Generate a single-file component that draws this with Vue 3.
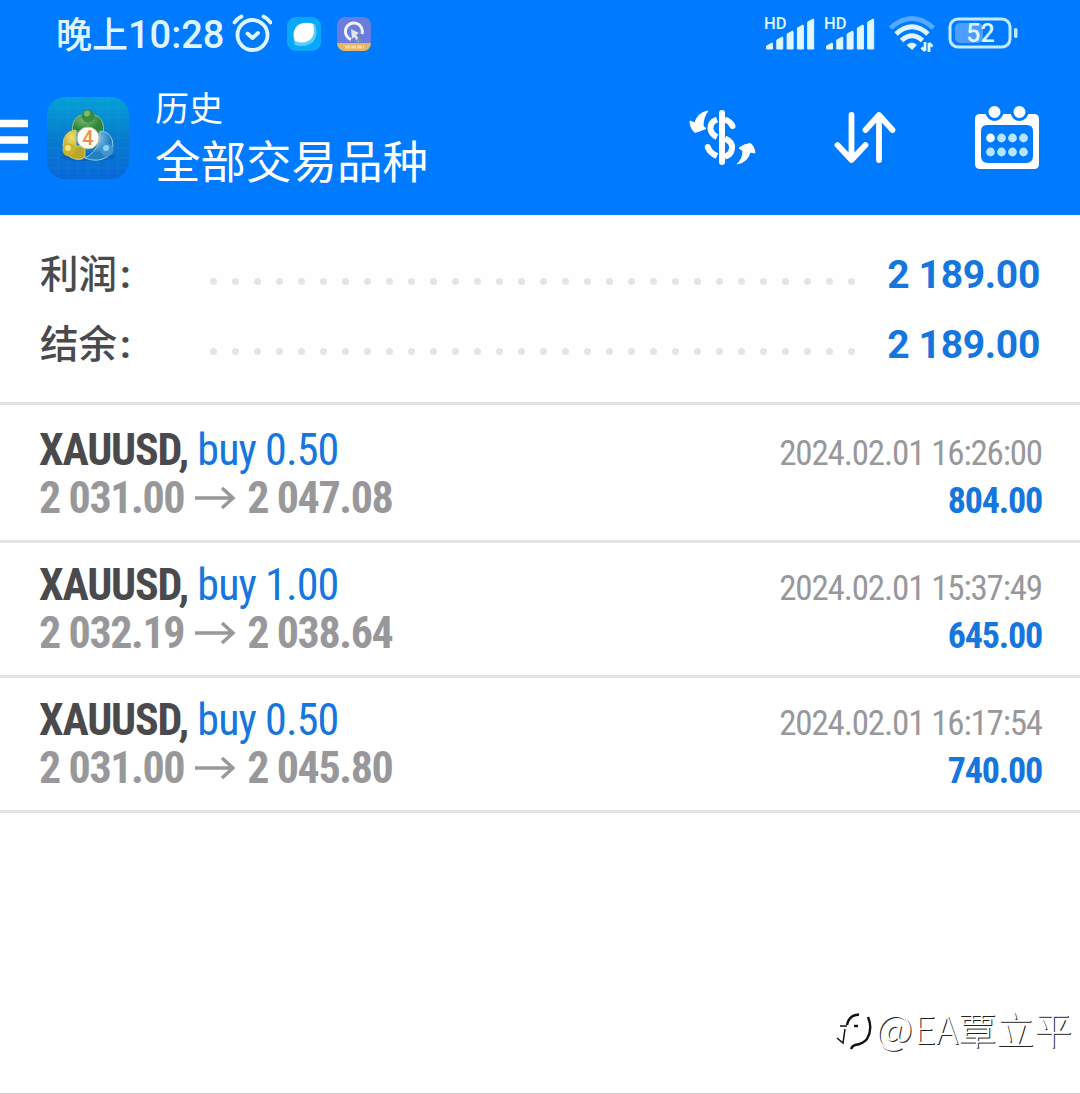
<script setup>
import { ref } from "vue";

const summary = ref([
    { label: "利润", value: "2 189.00" },
    { label: "结余", value: "2 189.00" },
]);

const deals = ref([
    {
        symbol: "XAUUSD",
        side: "buy 0.50",
        open: "2 031.00",
        close: "2 047.08",
        time: "2024.02.01 16:26:00",
        profit: "804.00",
    },
    {
        symbol: "XAUUSD",
        side: "buy 1.00",
        open: "2 032.19",
        close: "2 038.64",
        time: "2024.02.01 15:37:49",
        profit: "645.00",
    },
    {
        symbol: "XAUUSD",
        side: "buy 0.50",
        open: "2 031.00",
        close: "2 045.80",
        time: "2024.02.01 16:17:54",
        profit: "740.00",
    },
]);

const bars = [6, 12, 18, 24, 30];
</script>

<template>
    <div class="screen">
        <header class="top">
            <div class="status">
                <span class="clock">晚上<span class="digits">10:28</span></span>
                <svg class="alarm" width="40" height="40" viewBox="0 0 40 40">
                    <g fill="none" stroke="#dff6ff" stroke-width="3.8" stroke-linecap="round">
                        <circle cx="20.5" cy="21" r="15" />
                        <path d="M2.500 8.500Q5 4.500 9.500 2.500M31.500 2.500Q36 4.500 38.500 8.500" />
                        <path d="M15.500 19.500L20.500 24L26 19" stroke-linejoin="round" />
                    </g>
                </svg>
                <svg class="app-a" width="34" height="34" viewBox="0 0 34 34">
                    <rect width="34" height="34" rx="9" fill="#08a9fa" />
                    <path d="M8 28Q4 17 10 10Q17 4 28 7Q32 18 26 25Q18 31 8 28Z" fill="#59cdfb" />
                    <path d="M8 24Q4 14 11 8Q18 4 26 7Q29 16 24 22Q17 28 8 24Z" fill="#fff" />
                </svg>
                <svg class="app-b" width="34" height="34" viewBox="0 0 34 34">
                    <defs>
                        <clipPath id="quick"><rect width="34" height="34" rx="8" /></clipPath>
                    </defs>
                    <g clip-path="url(#quick)">
                        <rect width="34" height="34" fill="#687ddd" />
                        <path d="M0 26H34V34H0Z" fill="#e4b565" />
                        <path d="M8 30H27" stroke="#f3d9a5" stroke-width="3" stroke-dasharray="5 1" />
                    </g>
                    <path d="M14 22.500A8.500 8.500 0 1 1 25 17" fill="none" stroke="#f0f2ff" stroke-width="3" />
                    <path d="M14 12L22 16L19 18L24 23L21 25L17 20L15 22Z" fill="#e3e4ee" />
                    <path d="M21 19L25 24H20Z" fill="#8d8794" />
                </svg>
                <svg class="signals" width="114" height="48" viewBox="0 -6 114 48">
                    <g v-for="n in 2" :key="n" :transform="`translate(${(n - 1) * 60} 0)`" fill="#dff6ff">
                        <text x="2" y="13" class="hd">HD</text>
                        <path
                            v-for="(h, i) in bars"
                            :key="i"
                            :d="`M${4.5 + i * 10.3} 33V${36 - h}l5.500 -3q.5 0 .5 1V33z`"
                            stroke="#dff6ff"
                            stroke-linejoin="round"
                        />
                    </g>
                </svg>
                <svg class="wifi" width="48" height="40" viewBox="0 0 48 40">
                    <g fill="none" stroke="#dff6ff" stroke-width="5">
                        <path d="M2.500 14Q24 -5 45.500 14" stroke="#55a9ff" />
                        <path d="M8 20Q24 5.500 40 20" />
                        <path d="M13.500 26.500Q24 17 34.500 26.500" />
                    </g>
                    <path d="M18.500 31Q24 26 29 31L24 36Z" fill="#dff6ff" />
                    <path
                        d="M37 28V37M33.500 33.500L37 37M41 38V29M41 29L44.500 32.500"
                        fill="none"
                        stroke="#dff6ff"
                        stroke-width="2.800"
                    />
                </svg>
                <svg class="battery" width="72" height="34" viewBox="0 0 72 34">
                    <rect x="7" y="6" width="28" height="20" rx="5" fill="#4d9dff" />
                    <rect x="2" y="2" width="60" height="28" rx="8" fill="none" stroke="#c4eaff" stroke-width="3" />
                    <rect x="66" y="11" width="3.500" height="10" rx="1.700" fill="#c4eaff" />
                    <text x="32.500" y="25" text-anchor="middle" class="charge">52</text>
                </svg>
            </div>

            <div class="toolbar">
                <svg class="menu" width="28" height="42" viewBox="0 0 28 42">
                    <path d="M0 4.500H28M0 21H28M0 37.500H28" stroke="#fff" stroke-width="7.500" />
                </svg>
                <svg class="logo" width="82" height="82" viewBox="0 0 82 82">
                    <defs>
                        <linearGradient id="tile" x1="0" y1="0" x2="0" y2="1">
                            <stop offset="0" stop-color="#05a0d8" />
                            <stop offset=".5" stop-color="#087bcc" />
                            <stop offset="1" stop-color="#0868da" />
                        </linearGradient>
                        <radialGradient id="green" cx=".4" cy=".25">
                            <stop offset="0" stop-color="#7dbb69" />
                            <stop offset="1" stop-color="#2c8440" />
                        </radialGradient>
                        <radialGradient id="yellow" cx=".4" cy=".25">
                            <stop offset="0" stop-color="#f0e06c" />
                            <stop offset="1" stop-color="#b8a62c" />
                        </radialGradient>
                        <radialGradient id="blue" cx=".4" cy=".25">
                            <stop offset="0" stop-color="#8fd0f4" />
                            <stop offset="1" stop-color="#287fc0" />
                        </radialGradient>
                    </defs>
                    <rect width="82" height="82" rx="18" fill="url(#tile)" />
                    <path
                        d="M11 1V81M21 0V82M31 0V82M41 0V82M51 0V82M61 0V82M71 1V81M1 11H81M0 21H82M0 31H82M0 41H82M0 51H82M0 61H82M1 71H81"
                        stroke="#35b7ec"
                        stroke-width=".7"
                        opacity=".2"
                    />
                    <ellipse cx="41" cy="60" rx="28" ry="4" fill="#064b8c" opacity=".35" />
                    <path d="M26 38Q23 22 34 18H48Q59 22 56 38L48 35Q41 28 31 35Z" fill="url(#green)" stroke="#8fc27a" />
                    <path d="M29 33Q16 34 16 49L23 60Q33 65 38 60V49H29Z" fill="url(#yellow)" stroke="#d8cf6b" />
                    <path d="M53 34Q66 35 66 49L60 60Q50 66 38 61Q48 56 52 45Z" fill="url(#blue)" stroke="#8bcbed" />
                    <circle cx="41" cy="19" r="6.500" fill="#388c46" />
                    <circle cx="40" cy="16.500" r="3" fill="#7dbb69" />
                    <circle cx="22" cy="53" r="6.500" fill="#c8b32c" />
                    <circle cx="21" cy="51" r="3" fill="#efe37f" />
                    <circle cx="60" cy="53" r="6.500" fill="#4295d0" />
                    <circle cx="59" cy="51" r="3" fill="#8fd0f4" />
                    <circle cx="41" cy="41" r="11" fill="#fffdf8" stroke="#bcb9a2" />
                    <text x="41" y="48" text-anchor="middle" class="four">4</text>
                </svg>
                <div class="titles">
                    <div class="title">历史</div>
                    <div class="subtitle">全部交易品种</div>
                </div>
                <svg class="currency" width="68" height="58" viewBox="0 0 68 58">
                    <g fill="none" stroke="#fff" stroke-width="6">
                        <path d="M33 4V53" stroke-linecap="round" />
                        <path d="M28 10.500Q21 13 21.500 20Q22 25 28 28M36 10.500Q41 12 43.500 17M19 38.500Q21 44 28 47M36 29.500Q44 33 43 39.500Q42 46 36 47.500" />
                        <path d="M43 16L43.500 17M18.800 38L19 38.500" stroke-linecap="round" />
                    </g>
                    <path
                        d="M19 2Q8 4 6 14L1 12Q1 19 6 23.500Q11 22 17 19.500L14 17Q14 8 19 2Z"
                        fill="#fff"
                        stroke="#fff"
                        stroke-linejoin="round"
                    />
                    <path
                        d="M48 55Q59 53 61 43L66 44Q65 37 61.500 34.500Q55 35 50 39L54 42Q54 50 48 55Z"
                        fill="#fff"
                        stroke="#fff"
                        stroke-linejoin="round"
                    />
                </svg>
                <svg class="sort" width="62" height="54" viewBox="0 0 62 54">
                    <path
                        d="M17.500 4V48M3.500 34L17.500 49L31.500 34M45 49V5M31.500 19L45 4L58.500 19"
                        fill="none"
                        stroke="#fff"
                        stroke-width="5.800"
                        stroke-linecap="round"
                        stroke-linejoin="round"
                    />
                </svg>
                <svg class="calendar" width="66" height="66" viewBox="0 0 66 66">
                    <path
                        fill-rule="evenodd"
                        fill="#fff"
                        d="M6 9H60Q65 9 65 14V59Q65 64 60 64H6Q1 64 1 59V14Q1 9 6 9ZM13 20Q7 20 7 26V51Q7 58 14 58H52Q59 58 59 51V26Q59 20 53 20Z"
                    />
                    <g fill="#fff" stroke="#007aff" stroke-width="3">
                        <circle cx="20.500" cy="7" r="7.500" />
                        <circle cx="45.500" cy="7" r="7.500" />
                    </g>
                    <circle
                        v-for="n in 8"
                        :key="n"
                        :cx="16.5 + ((n - 1) % 4) * 11"
                        :cy="n > 4 ? 47 : 33"
                        r="4.400"
                        :fill="n === 1 ? '#f2fdff' : '#b5e6ff'"
                    />
                </svg>
            </div>
        </header>

        <section class="summary">
            <div v-for="item in summary" :key="item.label" class="total">
                <span class="label">{{ item.label }}<span class="colon">:</span></span>
                <svg class="dots" width="650" height="8" viewBox="0 0 650 8">
                    <circle v-for="n in 30" :key="n" :cx="3.5 + (n - 1) * 22" cy="4.500" r="3.500" fill="#e4e4e5" />
                </svg>
                <span class="amount">{{ item.value }}</span>
            </div>
        </section>

        <main>
            <article v-for="deal in deals" :key="deal.time" class="deal">
                <div class="left">
                    <div class="symbol">
                        <b>{{ deal.symbol }},</b> <span>{{ deal.side }}</span>
                    </div>
                    <div class="prices">
                        <span>{{ deal.open }}</span>
                        <svg width="41" height="24" viewBox="0 0 41 24">
                            <path d="M0 11H38M27 1L38 11L27 21" fill="none" stroke="#98989b" stroke-width="3.400" />
                        </svg>
                        <span>{{ deal.close }}</span>
                    </div>
                </div>
                <div class="right">
                    <div class="time">{{ deal.time }}</div>
                    <div class="profit">{{ deal.profit }}</div>
                </div>
            </article>
        </main>

        <footer class="mark">
            <svg width="38" height="42" viewBox="0 0 38 42">
                <g fill="none" stroke="#111">
                    <path d="M12 17Q14 7 24 6.500" stroke-width="2.400" />
                    <path d="M33 9Q38 21 32 31Q28 36 20 37Q17 38 16 41" stroke-width="2.400" />
                    <path d="M5 18H12M10 21L8 35L2 30" stroke-width="1.500" />
                    <path d="M19 18H23" stroke-width="2.400" />
                </g>
            </svg>
            <span><span class="at">@</span>EA覃立平</span>
        </footer>
    </div>
</template>

<style>
body {
    margin: 0;
    background: #fff;
}
</style>

<style scoped>
.screen {
    width: 1080px;
    height: 1094px;
    box-sizing: border-box;
    display: flex;
    flex-direction: column;
    overflow: hidden;
    background: #fff;
    border-bottom: 1px solid #cfcfcf;
    font-family: Roboto, "Noto Sans CJK SC", sans-serif;
}

.top {
    height: 215px;
    background: #007aff;
    color: #fff;
}

.status {
    height: 68px;
    display: flex;
    align-items: center;
    padding-left: 56px;
}

.clock {
    width: 176px;
    margin-top: -5px;
    font-size: 36px;
    font-weight: 500;
    color: #dff6ff;
    white-space: nowrap;
}

.digits {
    font-size: 38px;
}

.app-a {
    margin-left: 15px;
}

.app-b {
    margin-left: 16px;
}

.signals {
    margin-left: 391px;
}

.hd {
    font-size: 16.500px;
    font-weight: 500;
}

.wifi {
    margin-left: 12px;
}

.battery {
    margin-left: 12px;
}

.charge {
    font-size: 25px;
    font-weight: 500;
    fill: #dff6ff;
}

.toolbar {
    height: 140px;
    display: flex;
    align-items: center;
}

.menu {
    margin-top: 4px;
}

.logo {
    margin-left: 19px;
}

.four {
    font-size: 20px;
    font-weight: 500;
    fill: #ed8f4a;
}

.titles {
    width: 534px;
    margin-top: 3px;
    margin-left: 26px;
}

.title {
    font-size: 34px;
    line-height: 48px;
}

.subtitle {
    font-size: 45.500px;
    line-height: 62px;
}

.sort {
    margin-left: 77px;
}

.calendar {
    margin-left: 78px;
}

.summary {
    height: 190px;
    box-sizing: border-box;
    padding: 24px 40px 0 40px;
    border-bottom: 3px solid #e3e3e4;
    background: #fefefe;
}

.total {
    height: 70px;
    display: flex;
    align-items: center;
}

.label {
    width: 170px;
    margin-top: -6px;
    font-size: 38.500px;
    font-weight: 500;
    color: #4a4a4c;
}

.colon {
    margin-left: 3px;
    font-weight: 700;
}

.dots {
    margin-top: 14px;
}

.amount {
    flex: 1;
    margin-top: 2px;
    text-align: right;
    font-size: 39px;
    font-weight: 700;
    letter-spacing: -0.3px;
    color: #1576de;
}

main {
    padding-top: 3px;
}

.deal {
    height: 135px;
    box-sizing: border-box;
    display: flex;
    justify-content: space-between;
    padding: 18px 38px 0 39px;
    border-bottom: 3px solid #e3e3e4;
    font-family: "Roboto Condensed", Roboto, sans-serif;
    font-stretch: 75%;
    white-space: nowrap;
}

.symbol {
    font-size: 44px;
    line-height: 48px;
    letter-spacing: -0.9px;
    color: #1576de;
}

.symbol b {
    letter-spacing: -1.200px;
    color: #4a4a4c;
}

.prices {
    display: flex;
    align-items: center;
    gap: 11px;
    font-size: 44px;
    line-height: 49px;
    font-weight: 700;
    letter-spacing: -1.400px;
    color: #98989b;
}

.right {
    text-align: right;
}

.time {
    padding-top: 2px;
    font-size: 35px;
    line-height: 51px;
    letter-spacing: -1.150px;
    color: #98989b;
}

.profit {
    font-size: 36px;
    line-height: 45px;
    font-weight: 700;
    letter-spacing: -1.200px;
    color: #1576de;
}

.mark {
    display: flex;
    align-items: center;
    justify-content: flex-end;
    gap: 3px;
    margin-top: auto;
    height: 56px;
    padding: 0 8px 36px 0;
    font-family: "Noto Sans CJK SC", sans-serif;
    font-size: 38px;
    font-weight: 300;
    line-height: 50px;
    color: #fff;
    text-shadow: 1px 1px 0 #222;
}

.mark > span {
    margin-top: -4px;
}

.at {
    font-size: 41px;
    letter-spacing: 1px;
}
</style>
